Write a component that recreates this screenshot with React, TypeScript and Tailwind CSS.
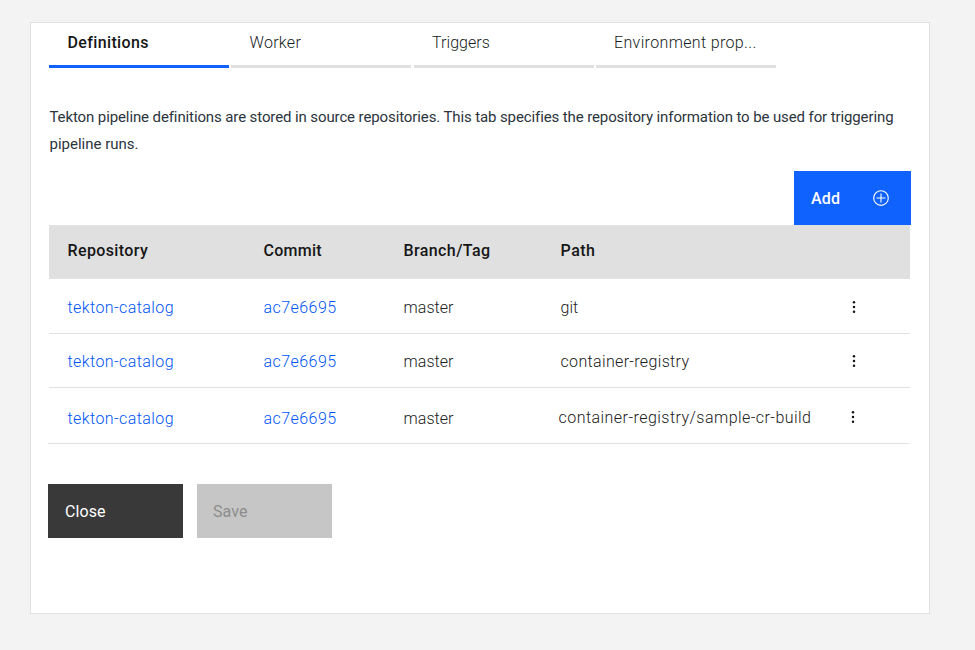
type TabItem = { label: string; className: string };

const tabs: TabItem[] = [
  {
    label: "Definitions",
    className: "border-[#0f62fe] pl-[18.5px] font-medium text-[#161616] tracking-[0.36px]",
  },
  {
    label: "Worker",
    className: "ml-[2px] border-[#e0e0e0] pl-[18.5px] text-[#171d24] tracking-[0.3px]",
  },
  {
    label: "Triggers",
    className: "ml-[3px] border-[#e0e0e0] pl-[18px] text-[#171d24] tracking-[0.06px]",
  },
  {
    label: "Environment prop...",
    className: "ml-[2px] border-[#e0e0e0] pl-[18px] text-[#171d24] tracking-[0.35px]",
  },
];

type Definition = {
  path: string;
  row: string;
  pathClass: string;
  menuClass: string;
};

const definitions: Definition[] = [
  { path: "git", row: "h-[55px] pt-[3px]", pathClass: "w-[291px]", menuClass: "pb-[2px]" },
  {
    path: "container-registry",
    row: "h-[54px] pt-[2px]",
    pathClass: "w-[291px] tracking-[0.34px]",
    menuClass: "pb-[2px]",
  },
  {
    path: "container-registry/sample-cr-build",
    row: "-ml-px mr-px h-[56px] pt-[6px] pl-[19.5px]",
    pathClass: "-ml-[2px] w-[292px] pb-[2px] tracking-[0.46px]",
    menuClass: "pb-[4px]",
  },
];

function AddIcon() {
  return (
    <svg width="18" height="18" viewBox="0 0 32 32" fill="#ffffff" aria-hidden="true">
      <path d="M16 4A12 12 0 1 1 4 16 12 12 0 0 1 16 4m0-2a14 14 0 1 0 14 14A14 14 0 0 0 16 2Z" />
      <path d="M24 15h-7V8h-2v7H8v2h7v7h2v-7h7v-2z" />
    </svg>
  );
}

function OverflowIcon() {
  return (
    <svg width="18" height="18" viewBox="0 0 32 32" fill="#161616" aria-hidden="true">
      <circle cx="16" cy="7.5" r="2.2" />
      <circle cx="16" cy="16" r="2.2" />
      <circle cx="16" cy="24.5" r="2.2" />
    </svg>
  );
}

export default function App() {
  return (
    <div className="h-[650px] w-[975px] bg-[#f3f3f3] pt-[22px] pl-[30px] font-['Roboto',sans-serif] text-base font-light">
      <main className="h-[592px] w-[900px] border border-[#dfe1e4] bg-white">
        <nav className="ml-[18px] flex h-[45px]">
          {tabs.map((tab) => (
            <button
              key={tab.label}
              className={`flex w-[180px] border-b-[3px] pt-[8px] text-left leading-6 whitespace-nowrap ${tab.className}`}
            >
              {tab.label}
            </button>
          ))}
        </nav>

        <p className="mt-[36px] ml-[18.5px] text-[15px] leading-[27px] font-normal whitespace-nowrap text-[#2c343c]">
          <span className="block tracking-[-0.11px]">
            Tekton pipeline definitions are stored in source repositories. This tab specifies the
            repository information to be used for triggering
          </span>
          <span className="block">pipeline runs.</span>
        </p>

        <div className="mt-[13px] mr-[18px] flex justify-end">
          <button className="flex h-[54px] w-[117px] items-center justify-between bg-[#0f62fe] pr-[21px] pl-[17px] font-medium tracking-[0.19px] text-white">
            <span className="pt-[2px]">Add</span>
            <AddIcon />
          </button>
        </div>

        <section className="ml-[18px] w-[861px]">
          <div className="flex h-[54px] bg-[#e0e0e0] pt-[14px] pl-[18.5px] leading-6 font-medium text-[#161616]">
            <span className="w-[196px] tracking-[0.38px]">Repository</span>
            <span className="w-[140px] tracking-[0.25px]">Commit</span>
            <span className="w-[157px] tracking-[0.4px]">Branch/Tag</span>
            <span className="tracking-[0.5px]">Path</span>
          </div>
          {definitions.map((item) => (
            <div
              key={item.path}
              className={`flex items-center border-b border-[#e0e0e0] pl-[18.5px] leading-6 text-[#202020] ${item.row}`}
            >
              <a className="w-[196px] tracking-[0.42px] text-[#0055f5]">tekton-catalog</a>
              <a className="w-[140px] tracking-[0.45px] text-[#0055f5]">ac7e6695</a>
              <span className="w-[157px] tracking-[0.06px]">master</span>
              <span className={`${item.pathClass}`}>{item.path}</span>
              <span className={`-ml-[7px] ${item.menuClass}`}>
                <OverflowIcon />
              </span>
            </div>
          ))}
        </section>

        <footer className="mt-[40px] ml-[17px] flex gap-[14px]">
          <button className="flex h-[54px] w-[135px] items-center bg-[#393939] pt-[2px] pl-[17px] font-normal tracking-[0.08px] text-white">
            Close
          </button>
          <button className="flex h-[54px] w-[135px] items-center bg-[#c6c6c6] pt-[2px] pl-[16px] font-normal tracking-[0.09px] text-[#8d8d8d]">
            Save
          </button>
        </footer>
      </main>
    </div>
  );
}
